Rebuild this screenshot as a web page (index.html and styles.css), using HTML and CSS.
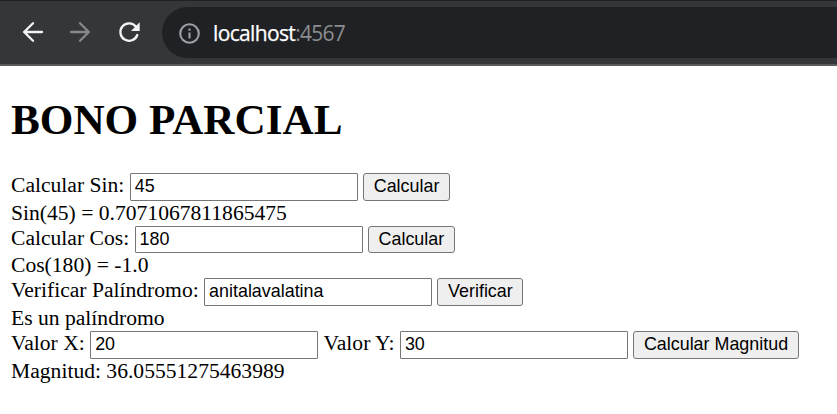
FILE: index.html
```
<!DOCTYPE html>
<html lang="es">
<head>
<meta charset="utf-8">
<title>Bono Parcial</title>
<link rel="stylesheet" href="styles.css">
</head>
<body>
<header class="toolbar">
  <svg class="icon" viewBox="0 0 24 24"><path d="M21 12H3.500M12 3.200 3.200 12l8.800 8.800"/></svg>
  <svg class="icon dim" viewBox="0 0 24 24"><path d="M2 12h17.500M11 3.200l8.800 8.800-8.800 8.800"/></svg>
  <svg class="icon" viewBox="0 0 24 24"><path d="M20.300 15a8.700 8.700 0 1 1-1.300-8.200"/><path class="fill" d="M22.700 2.300v8.700h-8.700z"/></svg>
  <div class="address">
    <svg class="info" viewBox="0 0 24 24"><circle cx="12" cy="12" r="9.700"/><path d="M12 11v6.200M12 6.700v2.400"/></svg>
    <span class="host">localhost</span><span class="port">:4567</span>
  </div>
</header>
<main class="page">
  <h1>BONO PARCIAL</h1>
  <form class="row"><label>Calcular Sin:</label><input value="45"><button type="button">Calcular</button></form>
  <div class="result">Sin(45) = 0.7071067811865475</div>
  <form class="row"><label>Calcular Cos:</label><input value="180"><button type="button">Calcular</button></form>
  <div class="result">Cos(180) = -1.0</div>
  <form class="row"><label>Verificar Palíndromo:</label><input value="anitalavalatina"><button type="button">Verificar</button></form>
  <div class="result">Es un palíndromo</div>
  <form class="row"><label>Valor X:</label><input value="20"><label>Valor Y:</label><input value="30"><button type="button">Calcular Magnitud</button></form>
  <div class="result">Magnitud: 36.05551275463989</div>
</main>
</body>
</html>
```
FILE: styles.css
```
* { box-sizing: border-box; }
body { margin: 0; background: #fff; color: #000; font-family: "Liberation Serif", serif; font-size: 21.6px; overflow: hidden; }
.toolbar { height: 66px; background: #35363a; border-top: 1px solid #202124; border-bottom: 2px solid #5a5a5e; display: flex; align-items: flex-start; padding: 6px 0 0 21px; }
.icon { width: 24px; height: 24px; margin: 13px 24px 0 0; fill: none; stroke: #f1f3f4; stroke-width: 2.3; stroke-linecap: round; flex: none; }
.icon.dim { stroke: #86888a; }
.icon .fill { fill: #f1f3f4; stroke: none; }
.address { flex: 1; height: 51px; margin-left: -3px; background: #202124; border-radius: 26px 0 0 26px; display: flex; align-items: center; padding-left: 16px; font: 21px "Open Sans", sans-serif; }
.info { width: 23px; height: 23px; margin: 2px 12px 0 0; fill: none; stroke: #9aa0a6; stroke-width: 2.2; }
.host { color: #fff; letter-spacing: -0.65px; -webkit-text-stroke: 0.25px #fff; }
.port { color: #8b8d8f; letter-spacing: -0.75px; }
.page { padding: 0 11px; }
h1 { margin: 28px 0 27px; font-size: 43.2px; line-height: 52px; }
.row { display: flex; align-items: flex-start; height: 27.6px; gap: 5.4px; line-height: 24px; }
.result { height: 25.07px; line-height: 24.6px; }
input { width: 228px; height: 27.6px; border: 1px solid #767676; border-radius: 1px; padding: 0 4px 0.4px; font: 17.9px "Liberation Sans", sans-serif; }
button { height: 27.6px; border: 1px solid #767676; border-radius: 3px; background: #efefef; color: #000; padding: 0 9.6px 0.4px; font: 17.9px "Liberation Sans", sans-serif; }
```
